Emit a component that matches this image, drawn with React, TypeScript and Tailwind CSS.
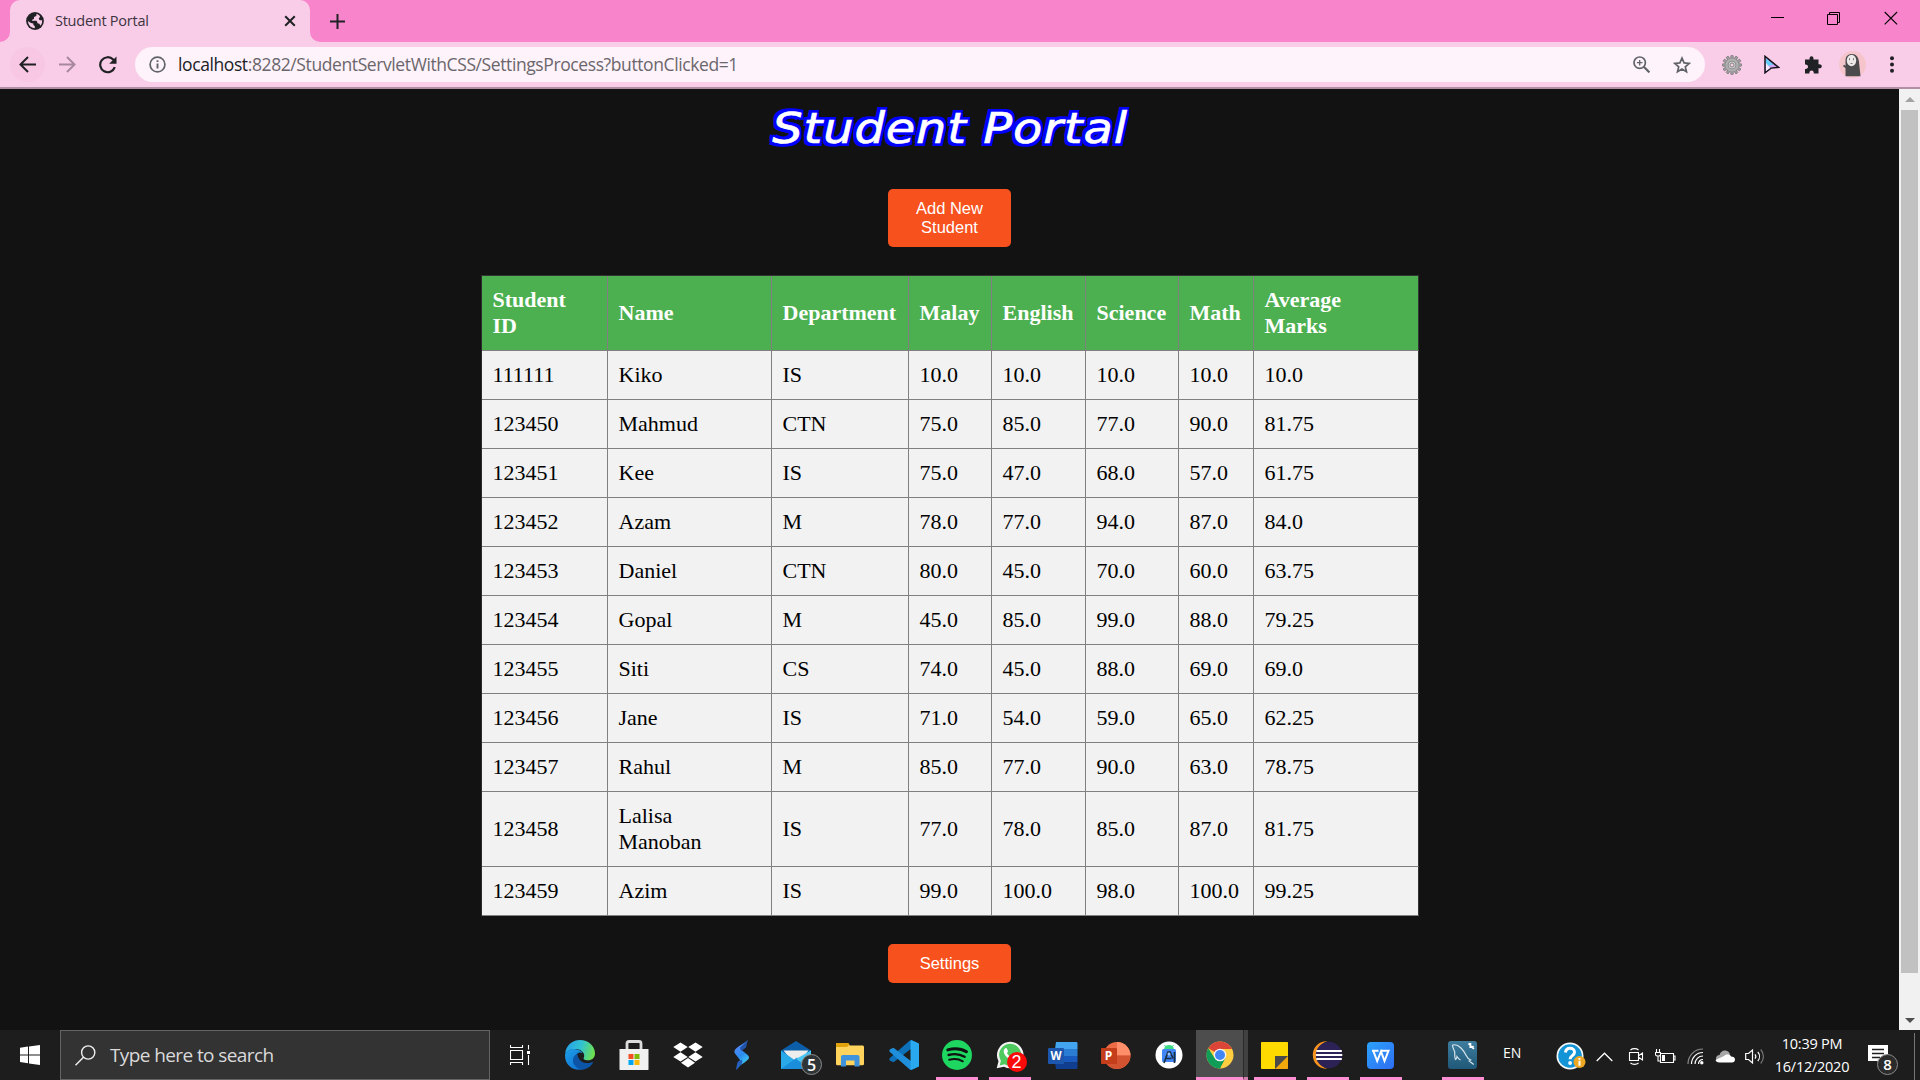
import React from "react";
import type { ReactNode } from "react";

const SEGOE = "font-['Open_Sans','Noto_Sans',sans-serif]";

type SvgProps = { w: number; h: number; children: ReactNode; className?: string };
const Svg = ({ w, h, children, className = "" }: SvgProps) => (
  <svg width={w} height={h} viewBox={`0 0 ${w} ${h}`} fill="none" className={`block shrink-0 ${className}`}>
    {children}
  </svg>
);

/* ---------- browser chrome ---------- */

const GlobeIcon = () => (
  <Svg w={18} h={18}>
    <circle cx="9" cy="9" r="8.900" fill="#202124" />
    <path d="M10.300 1.800c.5 1.500.3 2.400-1 2.700-1.300.2-1.600.8-1.300 1.700.2.800-.4 1.200-1.200 1.200-1 0-1 .9-.3 1.300h3.300c1 0 1.500.7 1.500 1.700 0 .7.500 1 1.200 1 .9 0 1.300.600 1.300 1.400l1 .6a7.200 7.200 0 0 0 1.300-5.300c-1.300.5-2.400.3-3-.7-.5-1-.2-1.500.5-2 .5-.4.500-1 0-1.700a7 7 0 0 0-3.300-1.900Z" fill="#f9cde8" />
    <path d="M2 9c0 4 3 7 6.800 7.200V14c-1-.2-1.500-.8-1.500-1.700v-.8C5.500 11.500 3.500 10.500 2 9Z" fill="#f9cde8" />
  </Svg>
);

const TabStrip = () => (
  <div className="flex h-[42px] bg-[#f884cc]">
    <div className="flex h-[42px] w-[10px] items-end bg-[#f9cde8]">
      <div className="h-full w-full rounded-br-[10px] bg-[#f884cc]" />
    </div>
    <div className="bg-[#f884cc]">
      <div className="flex h-[42px] w-[300px] items-center rounded-t-[10px] bg-[#f9cde8] pl-4 pr-[14px]">
        <GlobeIcon />
        <span className={`ml-[11px] flex-1 text-[14.500px] leading-5 tracking-[-0.25px] text-[#3c3340] ${SEGOE}`}>Student Portal</span>
        <Svg w={12} h={12}>
          <path d="m1.200 1.200 9.600 9.600m0-9.600-9.600 9.600" stroke="#202124" strokeWidth="2" />
        </Svg>
      </div>
    </div>
    <div className="h-[42px] w-[10px] bg-[#f9cde8]">
      <div className="h-full w-full rounded-bl-[10px] bg-[#f884cc]" />
    </div>
    <div className="ml-[10px] flex items-center">
      <Svg w={15} h={15}>
        <path d="M7.500 0v15M0 7.500h15" stroke="#202124" strokeWidth="2" />
      </Svg>
    </div>
    <div className="ml-auto flex gap-[43px] pr-[22px]">
      <Svg w={13} h={42}>
        <path d="M0 17.500h13" stroke="#000" />
      </Svg>
      <Svg w={13} h={42}>
        <path d="M.5 14.500h10v10H.5zM2.500 14.500v-2h10v10h-2" stroke="#000" />
      </Svg>
      <Svg w={14} h={42} className="ml-[1px]">
        <path d="m.7 12 12.400 12.400m0-12.400L.7 24.400" stroke="#000" strokeWidth="1.100" />
      </Svg>
    </div>
  </div>
);

const GEAR_TEETH = [0, 30, 60, 90, 120, 150, 180, 210, 240, 270, 300, 330];

const Toolbar = () => (
  <div className="flex h-[47px] items-center border-b-2 border-[#b08fa4] bg-[#f9cde8] pl-[10px]">
    <div className="flex size-[35px] items-center justify-center rounded-full bg-[#f7c7e3]">
      <Svg w={17} h={17}>
        <path d="M17 8.500H1.500M9 1 1.500 8.500 9 16" stroke="#202124" strokeWidth="2" />
      </Svg>
    </div>
    <Svg w={17} h={17} className="ml-[14px]">
      <path d="M0 8.500h15.500M8 1l7.500 7.500L8 16" stroke="#a8889d" strokeWidth="2" />
    </Svg>
    <Svg w={18} h={18} className="ml-[23px]">
      <path d="M15.800 11.200A7.500 7.500 0 1 1 14.200 3.600L16 5.500" stroke="#202124" strokeWidth="2.200" />
      <path d="M17.500.5v7.300h-7.300z" fill="#202124" />
    </Svg>
    <div className="ml-[18px] flex h-[35px] w-[1570px] items-center rounded-full bg-[#fef3fa] pl-[14px] pr-[14px]">
      <Svg w={17} h={17}>
        <circle cx="8.500" cy="8.500" r="7.400" stroke="#5f6368" strokeWidth="1.700" />
        <path d="M8.500 4.200v1.900M8.500 7.500v5" stroke="#5f6368" strokeWidth="1.900" />
      </Svg>
      <span className={`ml-[12px] whitespace-nowrap pb-px text-[17.500px] leading-6 tracking-[-0.400px] text-[#6b666c] ${SEGOE}`}>
        <span className="text-[#202124]">localhost</span>:8282/StudentServletWithCSS/SettingsProcess?buttonClicked=1
      </span>
      <Svg w={17} h={17} className="ml-auto">
        <circle cx="6.700" cy="6.700" r="5.700" stroke="#5f6368" strokeWidth="1.700" />
        <path d="m10.800 10.800 5.600 5.600" stroke="#5f6368" strokeWidth="2.200" />
        <path d="M6.700 3.900v5.600M3.900 6.700h5.600" stroke="#5f6368" strokeWidth="1.300" />
      </Svg>
      <Svg w={18} h={18} className="ml-[23px]">
        <path d="m9 2.200 2.100 4.700 5.100.5-3.900 3.400 1.200 5L9 13.100l-4.500 2.700 1.200-5-3.900-3.400 5.100-.5z" stroke="#5f6368" strokeWidth="1.700" />
      </Svg>
    </div>
    <Svg w={20} h={20} className="ml-[17px]">
      <g fill="#a2a2a2" stroke="#6e6e6e" strokeWidth=".7">
        {GEAR_TEETH.map((a) => (
          <rect key={a} x="8.800" y=".4" width="2.400" height="5" rx=".5" transform={`rotate(${a} 10 10)`} />
        ))}
      </g>
      <circle cx="10" cy="10" r="6.800" fill="#b0b0b0" stroke="#8a8a8a" strokeWidth=".5" />
      <circle cx="10" cy="10" r="4.300" fill="#7d7d7d" />
      <circle cx="10" cy="10" r="3.500" fill="#cfcfcf" />
      <circle cx="10" cy="10" r="2" fill="#f1d3e4" stroke="#707070" strokeWidth=".8" />
    </Svg>
    <Svg w={16} h={19} className="ml-[22px]">
      <path d="m1 1.300 13.500 11-7.500.8L1 17.800z" fill="#d7a4f5" stroke="#15131a" strokeWidth="1.500" />
      <path d="m2 3.300 7.500 6.500L5 10.500 2 12z" fill="#63cdf7" />
      <path d="m2 8 4 5-4 3z" fill="#f4ecfa" />
    </Svg>
    <Svg w={18} h={18} className="ml-[24px]">
      <path d="M1 3.500h4.600C5.300 1.500 6 .2 7.500.2s2.300 1.300 2 3.300H14.500v4.800c2-.3 3.300.5 3.300 2s-1.300 2.300-3.300 2v5.300h-4.700c.2-1.900-.8-3-2.200-3s-2.400 1.100-2.200 3H1v-4.700c1.900.2 3-.8 3-2.200S2.900 8.200 1 8.500z" fill="#202124" />
    </Svg>
    <Svg w={27} h={27} className="ml-[17px]">
      <circle cx="13.500" cy="13.500" r="13.500" fill="#f5c5cb" />
      <path d="M6.500 25.300V10C6.500 5 9 3 13 3s6.700 3 7 8l1.500 14.300z" fill="#4b4b4e" />
      <ellipse cx="12.500" cy="9.500" rx="4.700" ry="5.800" fill="#eee9e9" />
      <path d="M10.500 7.200v2m4-2v2M11.500 12.500h2" stroke="#777" />
      <path d="m4.500 14.500 3 2" stroke="#4b4b4e" strokeWidth="2" />
    </Svg>
    <Svg w={4} h={17} className="ml-[24px]">
      <circle cx="2" cy="2.200" r="2" fill="#202124" />
      <circle cx="2" cy="8.500" r="2" fill="#202124" />
      <circle cx="2" cy="14.800" r="2" fill="#202124" />
    </Svg>
  </div>
);

/* ---------- page ---------- */

const COLUMNS = [
  { label: "Student ID", width: "w-[126px]" },
  { label: "Name", width: "w-[164px]" },
  { label: "Department", width: "w-[137px]" },
  { label: "Malay", width: "w-[83px]" },
  { label: "English", width: "w-[94px]" },
  { label: "Science", width: "w-[93px]" },
  { label: "Math", width: "w-[75px]" },
  { label: "Average Marks", width: "w-[165px]" },
];

const STUDENTS = [
  ["111111", "Kiko", "IS", "10.0", "10.0", "10.0", "10.0", "10.0"],
  ["123450", "Mahmud", "CTN", "75.0", "85.0", "77.0", "90.0", "81.75"],
  ["123451", "Kee", "IS", "75.0", "47.0", "68.0", "57.0", "61.75"],
  ["123452", "Azam", "M", "78.0", "77.0", "94.0", "87.0", "84.0"],
  ["123453", "Daniel", "CTN", "80.0", "45.0", "70.0", "60.0", "63.75"],
  ["123454", "Gopal", "M", "45.0", "85.0", "99.0", "88.0", "79.25"],
  ["123455", "Siti", "CS", "74.0", "45.0", "88.0", "69.0", "69.0"],
  ["123456", "Jane", "IS", "71.0", "54.0", "59.0", "65.0", "62.25"],
  ["123457", "Rahul", "M", "85.0", "77.0", "90.0", "63.0", "78.75"],
  ["123458", "Lalisa Manoban", "IS", "77.0", "78.0", "85.0", "87.0", "81.75"],
  ["123459", "Azim", "IS", "99.0", "100.0", "98.0", "100.0", "99.25"],
];

const StudentTable = () => (
  <table className="mt-7 w-[938px] table-fixed border-separate border-spacing-0 border-l border-t border-l-[#2b2b2b] border-t-[#333] text-left font-['Liberation_Serif',serif] text-[22px] leading-[26px]">
    <thead>
      <tr className="h-[75px] bg-[#4caf50] text-white">
        {COLUMNS.map((c) => (
          <th key={c.label} className={`border-b border-r border-[#808080] py-0 pl-[11px] pr-[10px] align-middle font-bold first:pr-6 last:border-r-[#333] last:pr-12 ${c.width}`}>
            {c.label}
          </th>
        ))}
      </tr>
    </thead>
    <tbody>
      {STUDENTS.map((row) => (
        <tr key={row[0]} className="bg-[#f2f2f2] text-black">
          {row.map((cell, i) => (
            <td key={i} className="border-b border-r border-[#808080] pb-[11px] pl-[11px] pr-[10px] pt-[11px] align-middle last:border-r-[#333]">
              {cell}
            </td>
          ))}
        </tr>
      ))}
    </tbody>
  </table>
);

const PortalButton = ({ children, className }: { children: ReactNode; className: string }) => (
  <button className={`w-[123px] rounded-[5px] bg-[#f7511d] px-5 text-center font-['Liberation_Sans',Arial,sans-serif] text-[16.500px] leading-[19px] text-white ${className}`}>
    {children}
  </button>
);

const Scrollbar = () => (
  <div className="flex w-[21px] flex-col items-center bg-[#f1f1f1]">
    <div className="flex h-[21px] items-center">
      <Svg w={10} h={5}>
        <path d="M0 5 5 0l5 5z" fill="#a3a3a3" />
      </Svg>
    </div>
    <div className="h-[863px] w-[17px] bg-[#c1c1c1]" />
    <div className="mt-auto flex h-[20px] items-center">
      <Svg w={10} h={5}>
        <path d="m0 0 5 5 5-5z" fill="#505050" />
      </Svg>
    </div>
  </div>
);

/* ---------- taskbar ---------- */

const Slot = ({ children, active = false, wide = false, className = "" }: { children: ReactNode; active?: boolean; wide?: boolean; className?: string }) => (
  <div className={`flex h-[50px] shrink-0 flex-col items-center ${wide ? "w-[54px]" : "w-[53px]"} ${className}`}>
    <div className="flex h-[47px] items-center pt-[3px]">{children}</div>
    {active && <div className="h-[3px] w-[42px] bg-[#ff8fd3]" />}
  </div>
);

const Edge = () => (
  <Svg w={30} h={30}>
    <defs>
      <linearGradient id="edgeTop" x1="2" y1="6" x2="29" y2="14" gradientUnits="userSpaceOnUse">
        <stop stopColor="#27a5e8" />
        <stop offset=".5" stopColor="#33c4cf" />
        <stop offset="1" stopColor="#6fe04b" />
      </linearGradient>
      <linearGradient id="edgeSide" x1="3" y1="10" x2="18" y2="30" gradientUnits="userSpaceOnUse">
        <stop stopColor="#1c9ae6" />
        <stop offset="1" stopColor="#0f6fd2" />
      </linearGradient>
    </defs>
    <path d="M.2 13.500C1 5.500 7 0 15 0c8.500 0 15 6 15 13.500 0 4-3 6.800-7 6.800-3.800 0-5-1.400-4.200-2.600C20.500 14.500 17.500 9.500 11.500 9 6 8.600 2 10.500.2 13.500Z" fill="url(#edgeTop)" />
    <path d="M.1 14.500C1 10.500 5.500 8.600 10 9c4.500.5 7 2.500 7.500 4-3.500-1.700-7.500 1-7.500 6 0 5.500 5 9.500 9 10C8 32-.8 24.500.1 14.500Z" fill="url(#edgeSide)" />
    <path d="M12.500 13.500C9 15.500 7.500 18 8 21.500c.8 5 6 8.500 10.500 8 4.500-.8 8-3.800 9.500-7-.3-.6-.8-.5-1.300-.3-6.500 2.600-14.200-.7-14.200-8.700Z" fill="#0c54a5" />
  </Svg>
);

const Store = () => (
  <Svg w={30} h={30}>
    <path d="M8 9V3.500C8 2 8.500 1.500 10 1.500h10c1.500 0 2 .5 2 2V9" stroke="#dcdcdc" strokeWidth="2.800" />
    <path d="M.5 9h29v20.500c0 .3-.2.500-.5.500H1c-.3 0-.5-.2-.5-.5z" fill="#f0f0f0" />
    <path d="M9.500 14h5v5h-5z" fill="#f25022" />
    <path d="M15.500 14h5v5h-5z" fill="#7fba00" />
    <path d="M9.500 20h5v5h-5z" fill="#00a4ef" />
    <path d="M15.500 20h5v5h-5z" fill="#ffb900" />
  </Svg>
);

const Dropbox = () => (
  <Svg w={30} h={26}>
    <path d="m7.500.5 7.200 4.600-7.200 4.700L.3 5.100zM22.500.5l7.200 4.600-7.200 4.700-7.200-4.700zM7.500 10.300l7.200 4.600-7.200 4.700-7.200-4.700zM22.500 10.300l7.200 4.600-7.200 4.700-7.200-4.700zM15 16l7 4.800-7 4.800-7-4.800z" fill="#fff" />
  </Svg>
);

const Bolt = () => (
  <Svg w={17} h={30} className="-ml-px">
    <defs>
      <linearGradient id="boltFill" x1="1" y1="6" x2="16" y2="24" gradientUnits="userSpaceOnUse">
        <stop stopColor="#5a86f5" />
        <stop offset=".5" stopColor="#2a8cf0" />
        <stop offset="1" stopColor="#46dbee" />
      </linearGradient>
    </defs>
    <path d="M14.800 0C12 3 9.500 3.500 5.500 6.500 2 9 .5 11 2 13.500l5 6.500-2 6.500c4-2.500 8-4.500 10.500-7.500 1-1.500.5-2.500-.8-4L8 9.500z" fill="url(#boltFill)" />
    <path d="M14.800 0 13 7.500 8.500 11 6.800 8z" fill="#2253a8" />
    <path d="m2.800 30 1.700-8 4-2.500 1 2.500c-1.500 3.500-4 6-6.700 8Z" fill="#2460bd" />
  </Svg>
);

const Mail = () => (
  <div className="relative">
    <Svg w={30} h={28}>
      <path d="M0 9.500 15 0l15 9.500V18H0z" fill="#0c5ea9" />
      <path d="M2.500 9.500h25L20 19H10z" fill="#ededed" />
      <path d="M0 9.500 15 20 30 9.500V28H0z" fill="#29a9ea" />
      <path d="m0 28 16-11.500L30 28z" fill="#1b8edb" />
      <path d="M30 9.500V28L15 18z" fill="#48c6f3" />
    </Svg>
    <span className="absolute left-[20px] top-[13px] flex size-[21px] items-center justify-center rounded-full border border-[#8c8c8c] bg-[#2f3437] font-['Open_Sans',sans-serif] text-[16px] font-semibold leading-none text-white">5</span>
  </div>
);

const Explorer = () => (
  <Svg w={28} h={25}>
    <path d="M0 1.500C0 .5.500 0 1.500 0H11l3 2.500h12.500c.8 0 1.500.6 1.500 1.500V21c0 .7-.5 1.200-1.200 1.200H1.200C.5 22.200 0 21.700 0 21z" fill="#ffd35c" />
    <path d="M0 1.500C0 .5.500 0 1.500 0h11l1 1.500L11 4H0z" fill="#e2a20b" />
    <path d="M5 23.500v-9.500c0-1.200.7-2 2-2h14.500c1.200 0 2 .8 2 2v9.500h-5v-6H10v6z" fill="#3f93dd" />
  </Svg>
);

const VSCode = () => (
  <Svg w={30} h={30}>
    <path d="M22.500 0v8.500L4.500 22.200 1.500 21c-1.500-1-1.500-2.300-.3-3.300L20.500.8C21.300.1 22 0 22.500 0Z" fill="#0c71b8" />
    <path d="M22.500 30v-8.500L4.500 7.800 1.500 9c-1.500 1-1.500 2.300-.3 3.300l19.300 16.900c.8.700 1.500.8 2 .8Z" fill="#1f8fdb" />
    <path d="M22.500 0 30 3.500v23L22.500 30 21.500 29V1z" fill="#29a9f0" />
  </Svg>
);

const Spotify = () => (
  <Svg w={30} h={30}>
    <circle cx="15" cy="15" r="15" fill="#1ed760" />
    <path d="M5.700 9.900c6.200-1.800 13.500-1.300 18.800 1.900" stroke="#0f1210" strokeWidth="2.900" strokeLinecap="round" />
    <path d="M6.600 15c5.300-1.500 11.500-.9 16 1.800" stroke="#0f1210" strokeWidth="2.400" strokeLinecap="round" />
    <path d="M7.200 19.800c4.700-1.200 9.700-.8 13.600 1.500" stroke="#0f1210" strokeWidth="2" strokeLinecap="round" />
  </Svg>
);

const WhatsApp = () => (
  <div className="relative">
    <Svg w={28} h={28}>
      <path d="m.7 27.300 1.800-7A13.300 13.300 0 1 1 8 25.800z" fill="#f4f4f4" />
      <path d="m3.700 24.400 1.200-4.600a11 11 0 1 1 3.600 3.500z" fill="#4dc95e" />
      <path d="M9 7.500c.8-.8 1.600-.8 2 .2l.9 2.200c.2.800-.3 1.300-1 2 1 2 2.500 3.300 4.400 4.100 1-1.400 1.400-1.600 2-1.300l2.300 1.200c.9.500.3 2.600-.8 3.300C15.500 21 7 14.500 7.700 9.700c.1-.9.600-1.500 1.300-2.200Z" fill="#fff" />
    </Svg>
    <span className="absolute left-[11px] top-[11px] flex size-[20px] items-center justify-center rounded-full bg-[#fb0a0a] font-['Liberation_Sans',sans-serif] text-[18px] leading-none text-white">2</span>
  </div>
);

const Word = () => (
  <Svg w={30} h={27}>
    <path d="M8 0h20c1 0 1.500.5 1.500 1.500V7H7z" fill="#43a5ef" />
    <path d="M7 7h22.500v7H7z" fill="#2b7cd3" />
    <path d="M7 14h22.500v6.500H7z" fill="#185abd" />
    <path d="M7 20.500h22.500v5c0 1-.5 1.500-1.500 1.500H8z" fill="#103f91" />
    <rect x="0" y="6" width="16" height="16" rx="1" fill="#1d56ad" />
    <text x="8" y="18" textAnchor="middle" fontSize="11.500" fontWeight="700" fill="#fff" fontFamily="Open Sans, sans-serif">W</text>
  </Svg>
);

const PowerPoint = () => (
  <Svg w={30} h={27}>
    <circle cx="16" cy="13.500" r="13.500" fill="#ed6c47" />
    <path d="M16 0a13.500 13.500 0 0 1 13.500 13.500H16z" fill="#ff8f6b" />
    <path d="M29.500 13.500A13.500 13.500 0 0 1 3 17l13-3.500z" fill="#d35230" />
    <rect x="0" y="6" width="16" height="16" rx="1" fill="#c43e1c" />
    <text x="7.500" y="18.200" textAnchor="middle" fontSize="12" fontWeight="700" fill="#fff" fontFamily="Open Sans, sans-serif">P</text>
  </Svg>
);

const AndroidStudio = () => (
  <Svg w={28} h={28}>
    <circle cx="14" cy="14" r="13.500" fill="#fff" />
    <path d="M9 8.500a5 4.500 0 0 1 10 0z" fill="#3ddc84" />
    <path d="m9.500 4 1.500 2m7.500-2L17 6" stroke="#3ddc84" />
    <rect x="7" y="8" width="14" height="13" rx="1.500" fill="#4285f4" />
    <path d="m9 22 4-11h2.200L18 17.500M10.500 17.500h6M19.500 11v11" stroke="#183046" strokeWidth="1.700" />
    <circle cx="14" cy="13" r="1.500" fill="#9fc3fb" />
  </Svg>
);

const Chrome = () => (
  <Svg w={28} h={28}>
    <circle cx="14" cy="14" r="13.500" fill="#ffcd40" />
    <path d="M14 14 2.300 7.250A13.500 13.500 0 0 1 25.700 7.250L26 8H14z" fill="#db4437" />
    <path d="M2.300 7.250A13.500 13.500 0 0 0 14 27.500L19.500 17 14 14 8.500 17z" fill="#0f9d58" />
    <circle cx="14" cy="14" r="6.300" fill="#f4f4f4" />
    <circle cx="14" cy="14" r="5" fill="#4285f4" />
  </Svg>
);

const StickyNotes = () => (
  <Svg w={27} h={27}>
    <path d="M1 0h25c.6 0 1 .4 1 1v25c0 .6-.4 1-1 1H1c-.6 0-1-.4-1-1V1c0-.6.400-1 1-1Z" fill="#ffda00" />
    <path d="M14 14h13v13H14z" fill="#4a4a48" />
    <path d="M27 14v12c0 .6-.4 1-1 1H14z" fill="#f0a80c" />
  </Svg>
);

const Eclipse = () => (
  <Svg w={31} h={28}>
    <path d="M15.500.3C7 0 .8 6 .8 14S7 28 15.500 27.700C9.500 26 5 21 5 14S9.500 2 15.500.3Z" fill="#f7941e" />
    <circle cx="17" cy="14" r="13.200" fill="#2c2255" />
    <path d="M4.300 10h25.500M3.900 14h26.400M4.300 18h25.500" stroke="#fff" strokeWidth="1.900" />
  </Svg>
);

const Wps = () => (
  <Svg w={27} h={27}>
    <defs>
      <linearGradient id="wpsFill" x1="0" y1="0" x2="27" y2="27" gradientUnits="userSpaceOnUse">
        <stop stopColor="#2ba2fb" />
        <stop offset="1" stopColor="#2f6df2" />
      </linearGradient>
    </defs>
    <rect width="27" height="27" rx="4" fill="url(#wpsFill)" />
    <path d="M5 8.700h6.500M6.200 8.700l4 10.300 3.800-9.500 3.500 9.500 4-10.300h-8" stroke="#fff" strokeWidth="2" />
  </Svg>
);

const MySql = () => (
  <Svg w={29} h={28}>
    <defs>
      <linearGradient id="sqlFill" x1="0" y1="0" x2="0" y2="28" gradientUnits="userSpaceOnUse">
        <stop stopColor="#3f7d9f" />
        <stop offset="1" stopColor="#1f5878" />
      </linearGradient>
    </defs>
    <rect width="29" height="28" rx="3" fill="url(#sqlFill)" />
    <path d="M4.500 4c3-.8 6 .5 8.500 3 2.500 2.600 4 4.800 5.200 7.500.9 2 2.300 3.600 4.500 4.500l-1.500 1 4.500 3.500M4.500 4c0 3 1.600 4.500 2.200 6.800.4 2.200-.7 5 .8 7.700 1-.5 1.300-1.700 1.500-3 .8 1.500 1.500 2.600 3.500 3.500" stroke="#d7e5ec" strokeWidth="1.200" />
    <path d="m20.500 2.500 2.500 2.200M22.500 5l3.500 2.800M22.500 2l-.2 4 3.500-.3" stroke="#fff" strokeWidth="1.700" />
  </Svg>
);

const Tray = () => (
  <>
    <Svg w={30} h={30} className="ml-[33px]">
      <circle cx="14" cy="14" r="13.500" fill="#f6f8fa" />
      <circle cx="14" cy="14" r="11.800" fill="#1294d6" />
      <path d="M9.500 10.500C9.800 7.500 11.500 6.300 14 6.300c2.700 0 4.500 1.600 4.500 3.900 0 3.300-4.400 3.600-4.400 7" stroke="#fff" strokeWidth="3" />
      <circle cx="14.100" cy="21" r="1.900" fill="#fff" />
      <circle cx="23.500" cy="20" r="6" fill="#efa823" />
      <path d="M23.500 16v1.700M23.500 18.700v5" stroke="#fff" strokeWidth="2" />
    </Svg>
    <Svg w={17} h={10} className="ml-[10px]">
      <path d="m.7 9 7.800-7.800L16.300 9" stroke="#fff" strokeWidth="1.300" />
    </Svg>
    <Svg w={16} h={19} className="ml-[15px]">
      <path d="M1.500 5.500h9v8h-9zM10.500 8.700l4-2.700v7l-4-2.700M2.500 3c2-1.800 6-1.800 8 0M2.500 16c2 1.800 6 1.800 8 0" stroke="#fff" strokeWidth="1.100" />
    </Svg>
    <Svg w={21} h={15} className="ml-[11px]">
      <path d="M5.500 4.500h13v9h-13zM18.500 7h1.500v4h-1.500M1.500 0v3M4.500 0v3M.5 3.500h5v2c0 2-5 2-5 0zM3 7v5h2" stroke="#fff" strokeWidth="1.100" />
      <path d="M7 6h3v6H7z" fill="#fff" />
    </Svg>
    <Svg w={17} h={17} className="ml-[11px]">
      <path d="M1 16C1 7.500 7.500 1 16 1" stroke="#8b8b8b" strokeWidth="1.200" />
      <path d="M4.500 16C4.500 9.500 9.500 4.500 16 4.500M8 16c0-4.500 3.500-8 8-8M11.500 16c0-2.700 1.800-4.500 4.500-4.500" stroke="#fff" strokeWidth="1.200" />
      <circle cx="14.800" cy="14.800" r="1.700" fill="#fff" />
    </Svg>
    <Svg w={20} h={13} className="ml-[11px]">
      <path d="M1 8.500C1 6 3 5 4.500 5 5.500 1.500 8 0 10.500.5c2.500.4 4 1.700 4.500 4L8 11H3C1.700 11 1 10 1 8.500Z" fill="#a7a7a7" />
      <path d="M4.500 12.500C2 12.500 1 11.500.5 10L9 6c2-2 6-2 7 .5 2.500 0 4 1.200 4 3s-1.300 3-3 3z" fill="#fff" />
    </Svg>
    <Svg w={21} h={17} className="ml-[10px]">
      <path d="M.7 5.500H3.500L7.500 2v13L3.500 11.500H.7z" stroke="#fff" strokeWidth="1.200" />
      <path d="M10 6.300c1 1.300 1 3.100 0 4.400M12.800 4c2.200 2.600 2.200 6.400 0 9" stroke="#fff" strokeWidth="1.200" />
      <path d="M15.700 1.500c3.600 4 3.600 10 0 14" stroke="#777" strokeWidth="1.200" />
    </Svg>
    <div className={`ml-[6px] w-[80px] whitespace-nowrap pb-[4px] text-center text-[14.500px] leading-[23px] tracking-[-0.260px] text-white ${SEGOE}`}>
      <div>10:39 PM</div>
      <div>16/12/2020</div>
    </div>
    <div className="relative ml-[16px] mb-[4px]">
      <Svg w={20} h={20}>
        <path d="M0 0h20v16h-6v4l-5-4H0z" fill="#fff" />
        <path d="M4 4.500h12M4 8.500h12M4 12.500h8" stroke="#1f1f1f" strokeWidth="1.300" />
      </Svg>
      <span className="absolute left-[9px] top-[9px] flex size-[21px] items-center justify-center rounded-full border border-[#8c8c8c] bg-[#2b2b2b] font-['Open_Sans',sans-serif] text-[15px] font-semibold leading-none text-white">8</span>
    </div>
    <div className="ml-auto mr-[5px] h-full w-px bg-[#767676]" />
  </>
);

const Taskbar = () => (
  <div className="flex h-[50px] w-[1920px] items-center overflow-hidden bg-[#1d1d1d]">
    <div className="flex w-[60px] justify-center">
      <Svg w={20} h={20}>
        <path d="M0 2.800 8 1.600v7.800H0zM9 1.500 20 0v9.400H9zM0 10.400h8v7.900l-8-1.200zM9 10.400h11V20L9 18.400z" fill="#fff" />
      </Svg>
    </div>
    <div className="flex h-[50px] w-[430px] items-center border border-[#646464] bg-[#333] pl-[14px]">
      <Svg w={21} h={21}>
        <circle cx="13.200" cy="7.500" r="6.600" stroke="#f0f0f0" strokeWidth="1.400" />
        <path d="M8.500 12.200.5 20.300" stroke="#f0f0f0" strokeWidth="1.400" />
      </Svg>
      <span className={`ml-[14px] text-[19px] leading-6 tracking-[-0.600px] text-[#dadada] ${SEGOE}`}>Type here to search</span>
    </div>
    <Svg w={20} h={20} className="ml-[20px]">
      <path d="M.5 5.500h12v9H.5zM.5 0v2.500h12V0M.5 20v-2.500h12V20M18.500 0v4.500M18.500 10v10" stroke="#fff" strokeWidth="1.100" />
      <path d="M17 6h3v3h-3z" fill="#fff" />
    </Svg>
    <div className="ml-[23px] flex">
      <Slot wide><Edge /></Slot>
      <Slot wide><Store /></Slot>
      <Slot wide><Dropbox /></Slot>
      <Slot wide><Bolt /></Slot>
      <Slot wide><Mail /></Slot>
      <Slot wide><Explorer /></Slot>
      <Slot><VSCode /></Slot>
      <Slot active><Spotify /></Slot>
      <Slot active><WhatsApp /></Slot>
      <Slot><Word /></Slot>
      <Slot><PowerPoint /></Slot>
      <Slot><AndroidStudio /></Slot>
      <div className="flex h-[50px] w-[53px] shrink-0 pl-px">
        <div className="flex w-[47px] flex-col items-center border-b-[3px] border-[#ff8fd3] bg-[#4d4d4d] pt-[11px]"><Chrome /></div>
        <div className="w-[5px] border-b-[3px] border-l border-b-[#d67ab2] border-l-[#2a2a2a] bg-[#414141]" />
      </div>
      <Slot active><StickyNotes /></Slot>
      <Slot active><Eclipse /></Slot>
      <Slot active><Wps /></Slot>
      <Slot active className="ml-[29px]"><MySql /></Slot>
    </div>
    <span className={`ml-[14px] w-[18px] whitespace-nowrap pb-[4px] text-[14px] leading-5 text-white ${SEGOE}`}>EN</span>
    <div className="ml-[2px] flex h-full flex-1 items-center pt-[3px]">
      <Tray />
    </div>
  </div>
);

export default function App() {
  return (
    <div className="flex h-[1080px] w-[1920px] flex-col overflow-hidden bg-[#121212]">
      <TabStrip />
      <Toolbar />
      <div className="flex h-[941px]">
        <main className="flex flex-1 flex-col items-center">
          <h1 className="ml-[2px] mt-[12px] h-[56px] scale-x-[1.14] whitespace-nowrap font-['DejaVu_Sans',Verdana,sans-serif] text-[42px] italic leading-[56px] tracking-[0.800px] text-white [-webkit-text-stroke:0.600px_#fff] [text-shadow:-2.500px_-3px_0_#00f,2.500px_-3px_0_#00f,-2.500px_3px_0_#00f,2.500px_3px_0_#00f,0_-3px_0_#00f,0_3px_0_#00f,-2.500px_0_0_#00f,2.500px_0_0_#00f]">
            Student Portal
          </h1>
          <PortalButton className="mt-[32px] h-[58px]">Add New Student</PortalButton>
          <StudentTable />
          <PortalButton className="mt-7 h-[39px]">Settings</PortalButton>
        </main>
        <Scrollbar />
      </div>
      <Taskbar />
    </div>
  );
}
